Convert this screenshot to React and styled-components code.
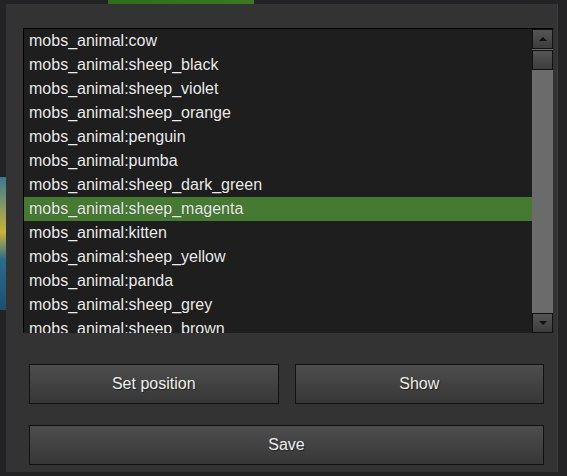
import styled, { createGlobalStyle } from 'styled-components';

const GlobalStyle = createGlobalStyle`
  html, body {
    margin: 0;
    padding: 0;
  }
  body {
    width: 567px;
    height: 476px;
    overflow: hidden;
    font-family: "Liberation Sans", Arial, sans-serif;
    background:
      linear-gradient(90deg, transparent 108px, #2f6d1a 108px, #3b7a1f 254px, transparent 254px) 0 0 / 100% 4px no-repeat,
      linear-gradient(180deg, transparent 177px, #3b7892 177px, #c9b43a 232px, #2a6b8c 260px, #1d4f6e 310px, transparent 310px) 0 0 / 6px 100% no-repeat,
      #232326;
  }
`;

const Page = styled.div`
  padding: 4px 10px 4px 6px;
`;

const Panel = styled.div`
  width: 551px;
  height: 468px;
  box-sizing: border-box;
  background: #333333;
  box-shadow: 1px 0 0 #3c3c3c;
  padding: 24px 13px 0 17px;
  display: flex;
  flex-direction: column;
`;

const ListBox = styled.div`
  display: flex;
  height: 305px;
  margin-right: -9px;
  box-sizing: border-box;
  border-top: 1px solid #000;
  border-left: 1px solid #000;
`;

const Rows = styled.div`
  flex: 1;
  background: #1e1e1e;
  overflow: hidden;
`;

const Row = styled.div`
  height: 24px;
  line-height: 24px;
  padding-left: 5px;
  font-size: 16px;
  color: #ececec;
  white-space: nowrap;
  text-shadow: 0 0 1px rgba(0, 0, 0, 0.6);
  background: ${p => (p.$selected ? '#467a32' : 'transparent')};
`;

const ScrollBar = styled.div`
  width: 21px;
  background: #6b6b6b;
  display: flex;
  flex-direction: column;
`;

const ScrollButton = styled.div`
  height: 20px;
  box-sizing: border-box;
  border: 1px solid #111;
  background: linear-gradient(#555555, #3d3d3d);
  display: flex;
  align-items: center;
  justify-content: center;
  margin-bottom: ${p => (p.$gap ? '1px' : '0')};
`;

const Spacer = styled.div`
  flex: 1;
`;

const Arrow = styled.div`
  width: 0;
  height: 0;
  border-left: 4px solid transparent;
  border-right: 4px solid transparent;
  ${p => (p.$down ? 'border-top: 4px solid #111;' : 'border-bottom: 4px solid #111;')}
`;

const ButtonRow = styled.div`
  display: flex;
  gap: 16px;
  margin-top: 31px;
  margin-left: 6px;
`;

const Button = styled.button`
  flex: 1;
  height: 40px;
  margin: 0;
  box-sizing: border-box;
  border: 1px solid #111;
  border-radius: 0;
  background: linear-gradient(#4d4d4d, #373737);
  color: #eeeeee;
  font-family: "Liberation Sans", Arial, sans-serif;
  font-size: 16px;
  text-shadow: 1px 1px 1px rgba(0, 0, 0, 0.5);
  padding: 0;
  cursor: pointer;
`;

const SaveRow = styled.div`
  display: flex;
  margin-top: 21px;
  margin-left: 6px;
`;

const animals = [
  'mobs_animal:cow',
  'mobs_animal:sheep_black',
  'mobs_animal:sheep_violet',
  'mobs_animal:sheep_orange',
  'mobs_animal:penguin',
  'mobs_animal:pumba',
  'mobs_animal:sheep_dark_green',
  'mobs_animal:sheep_magenta',
  'mobs_animal:kitten',
  'mobs_animal:sheep_yellow',
  'mobs_animal:panda',
  'mobs_animal:sheep_grey',
  'mobs_animal:sheep_brown',
];

const App = () => {
  const selected = 'mobs_animal:sheep_magenta';

  return (
    <Page>
      <GlobalStyle />
      <Panel>
        <ListBox>
          <Rows>
            {animals.map(name => (
              <Row key={name} $selected={name === selected}>{name}</Row>
            ))}
          </Rows>
          <ScrollBar>
            <ScrollButton $gap><Arrow /></ScrollButton>
            <ScrollButton />
            <Spacer />
            <ScrollButton><Arrow $down /></ScrollButton>
          </ScrollBar>
        </ListBox>
        <ButtonRow>
          <Button>Set position</Button>
          <Button>Show</Button>
        </ButtonRow>
        <SaveRow>
          <Button>Save</Button>
        </SaveRow>
      </Panel>
    </Page>
  );
};

export default App;
